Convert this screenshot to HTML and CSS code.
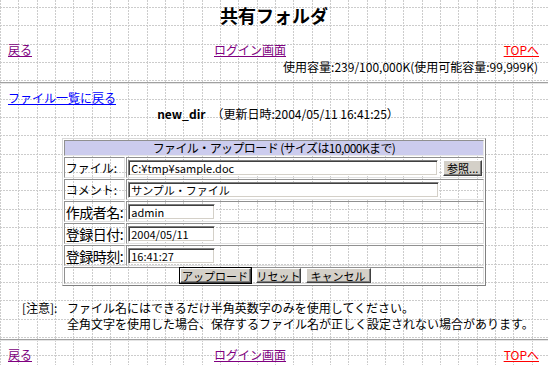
FILE: index.html
```html
<!DOCTYPE html>
<html lang="ja">
<head>
<meta charset="utf-8">
<title>共有フォルダ</title>
<link rel="stylesheet" href="styles.css">
</head>
<body>
<h1 class="title">共有フォルダ</h1>
<div class="nav">
  <a class="visited" href="#">戻る</a>
  <a class="visited" href="#">ログイン画面</a>
  <a class="top" href="#">TOPへ</a>
</div>
<div class="usage">使用容量:239/100,000K(使用可能容量:99,999K)</div>
<hr class="rule">
<div class="back"><a class="link" href="#">ファイル一覧に戻る</a></div>
<div class="dirinfo"><b>new_dir</b>　（更新日時:2004/05/11 16:41:25）</div>
<form class="form">
<table class="upload">
  <tr><th class="head" colspan="2">ファイル・アップロード (サイズは10,000Kまで)</th></tr>
  <tr>
    <td class="label">ファイル:</td>
    <td class="field"><div class="filebox"><input class="input wide" type="text" value="C:¥tmp¥sample.doc"><button class="btn browse" type="button">参照...</button></div></td>
  </tr>
  <tr>
    <td class="label">コメント:</td>
    <td class="field"><input class="input wide2" type="text" value="サンプル・ファイル"></td>
  </tr>
  <tr>
    <td class="label big">作成者名:</td>
    <td class="field"><input class="input short" type="text" value="admin"></td>
  </tr>
  <tr>
    <td class="label big">登録日付:</td>
    <td class="field"><input class="input short" type="text" value="2004/05/11"></td>
  </tr>
  <tr>
    <td class="label big">登録時刻:</td>
    <td class="field"><input class="input short" type="text" value="16:41:27"></td>
  </tr>
  <tr>
    <td class="actions" colspan="2"><div class="buttons"><button class="btn default w-upload" type="button">アップロード</button><button class="btn w-reset" type="reset">リセット</button><button class="btn w-cancel" type="button">キャンセル</button></div></td>
  </tr>
</table>
</form>
<div class="notes">
  <span class="notelabel">[注意]:</span>
  <div class="notetext">ファイル名にはできるだけ半角英数字のみを使用してください。<br>全角文字を使用した場合、保存するファイル名が正しく設定されない場合があります。</div>
</div>
<hr class="rule rule2">
<div class="nav nav2">
  <a class="visited" href="#">戻る</a>
  <a class="visited" href="#">ログイン画面</a>
  <a class="top" href="#">TOPへ</a>
</div>
</body>
</html>
```
FILE: styles.css
```css
html, body {
  margin: 0;
  padding: 0;
}
body {
  width: 548px;
  height: 365px;
  overflow: hidden;
  font-family: "Noto Sans CJK JP", sans-serif;
  font-size: 12px;
  line-height: 16px;
  color: #000;
  background-color: #fff;
  background-image: url("data:image/svg+xml,%3Csvg xmlns='http://www.w3.org/2000/svg' width='55' height='55'%3E%3Cg stroke='%23cccccc' stroke-width='1' stroke-dasharray='2 1' fill='none'%3E%3Cpath d='M0.5 0V55M18.5 0V55M37.5 0V55'/%3E%3Cpath d='M0 0.5H55M0 18.5H55M0 37.5H55'/%3E%3C/g%3E%3C/svg%3E");
  background-size: 55px 55px;
  background-position: 0 7px;
}
a { text-decoration: underline; }
.visited { color: #800080; }
.top { color: #ff0000; }
.link { color: #0000ff; }

.title {
  margin: 0;
  padding-top: 3px;
  font-size: 18px;
  line-height: 24px;
  font-weight: bold;
  text-align: center;
}
.nav {
  margin-top: 15px;
  padding: 0 9px 0 8px;
  display: grid;
  grid-template-columns: 206px 1fr auto;
  height: 16px;
}
.usage {
  margin-top: 1px;
  padding-right: 10px;
  text-align: right;
  height: 16px;
}
.rule {
  margin: 7px 0 0;
  height: 0;
  border: 0;
  border-top: 1px solid #a0a0a0;
  border-bottom: 1px solid #e4e4e4;
}
.back {
  margin-top: 6px;
  padding-left: 8px;
  height: 16px;
}
.dirinfo {
  text-align: center;
  height: 16px;
  padding-left: 8px;
}
.form { margin: 0; }
.upload {
  margin: 16px auto 0;
  width: 420px;
  border: 1px solid;
  border-color: #d8d8d8 #808080 #808080 #d8d8d8;
  border-spacing: 1px;
}
.head {
  height: 14px;
  padding: 0;
  background: #ccccee;
  border: 1px solid;
  border-color: #909090 #e8e8e8 #e8e8e8 #909090;
  font-weight: normal;
  font-size: 12px;
  line-height: 14px;
  letter-spacing: -0.6px;
  text-align: center;
}
.label, .field, .actions {
  border: 1px solid;
  border-color: #909090 #e0e0e0 #e0e0e0 #909090;
  padding: 0 1px;
  height: 19px;
  white-space: nowrap;
}
.label {
  width: 56px;
  font-size: 12px;
  line-height: 18px;
}
.label.big {
  font-size: 14px;
  letter-spacing: -0.5px;
}
.actions { height: 15px; padding: 0; }
.filebox {
  display: flex;
  align-items: center;
  gap: 5px;
}
.input {
  box-sizing: border-box;
  height: 16px;
  margin: 0;
  padding: 0 2px;
  border: 1px solid;
  border-color: #808080 #ffffff #ffffff #808080;
  box-shadow: inset 1px 1px 0 #404040, inset -1px -1px 0 #d4d0c8;
  background: #fff;
  font-family: "Noto Sans CJK JP", sans-serif;
  font-size: 11px;
  line-height: 12px;
  color: #000;
  display: block;
}
.wide { width: 310px; }
.wide2 { width: 311px; }
.short { width: 87px; }
.btn {
  box-sizing: border-box;
  height: 15px;
  margin: 0;
  padding: 0;
  background: #d4d0c8;
  border: 1px solid;
  border-color: #ffffff #404040 #404040 #ffffff;
  box-shadow: inset -1px -1px 0 #808080;
  font-family: "Noto Sans CJK JP", sans-serif;
  font-size: 11px;
  line-height: 12px;
  color: #000;
}
.browse { width: 39px; height: 16px; }
.default { outline: 1px solid #000; }
.buttons {
  display: flex;
  justify-content: center;
  gap: 5px;
  padding-left: 2px;
}
.w-upload { width: 71px; }
.w-reset { width: 45px; }
.w-cancel { width: 65px; }
.notes {
  margin-top: 14px;
  padding-left: 22px;
  display: grid;
  grid-template-columns: 45px auto;
  line-height: 16px;
}
.rule2 { margin-top: 7px; }
.nav2 { margin-top: 6px; }
```
